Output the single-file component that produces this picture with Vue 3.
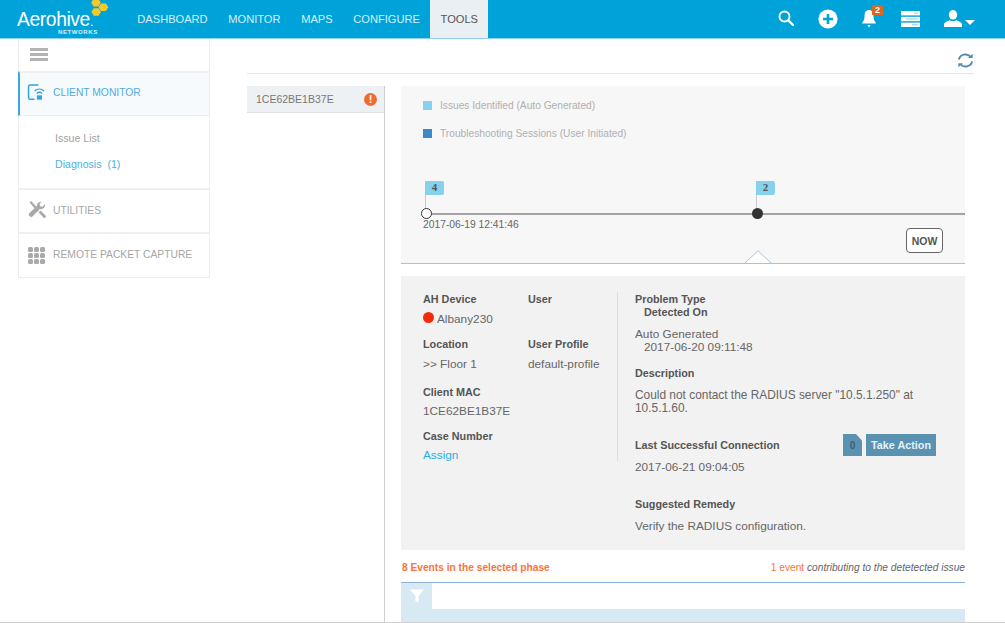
<script setup>
const navItems = [
  { label: 'DASHBOARD' },
  { label: 'MONITOR' },
  { label: 'MAPS' },
  { label: 'CONFIGURE' },
  { label: 'TOOLS', active: true }
]
const flags = [
  { count: 4, left: 24 },
  { count: 2, left: 355 }
]
</script>

<template>
  <div class="page">
    <header class="topbar">
      <div class="logo">
        <span class="logo-name">Aerohive<i>.</i></span>
        <span class="logo-sub">NETWORKS</span>
        <svg class="logo-hex" viewBox="0 0 20 20" width="20" height="20">
          <path d="M4.6 0h4.8l2.4 3.6-2.4 3.9H4.6L2.2 3.6z" fill="#f6c927" />
          <path d="M12 4.6h4.8l2.6 3.6-2.6 3.9H12L9.6 8.2z" fill="#f6c927" />
          <path d="M4.8 9.2h4.8l2.4 3.6-2.4 3.9H4.8l-2.4-3.9z" fill="#f6c927" />
        </svg>
      </div>
      <nav class="nav">
        <a v-for="item in navItems" :key="item.label" class="nav-item" :class="{ active: item.active }">{{ item.label }}</a>
      </nav>
      <div class="top-icons">
        <svg class="ico-search" viewBox="0 0 16 16" width="16" height="16" fill="none" stroke="#fff">
          <circle cx="6.5" cy="6.5" r="5" stroke-width="1.9" />
          <path d="M10.3 10.3 15 15" stroke-width="2.4" stroke-linecap="round" />
        </svg>
        <svg class="ico-plus" viewBox="0 0 20 20" width="20" height="20">
          <circle cx="10" cy="10" r="9.6" fill="#fff" />
          <path d="M10 5v10M5 10h10" stroke="#00a3d9" stroke-width="2.6" />
        </svg>
        <div class="bell-wrap">
          <svg viewBox="0 0 14 19" width="14" height="19">
            <path d="M7 1c3 0 4.4 2.4 4.4 5.4 0 3.4.8 5.4 2.3 7.2v1H.3v-1C1.800 11.800 2.600 9.800 2.600 6.400 2.600 3.400 4 1 7 1zM5.300 16h3.400L7 18.600z" fill="#fff" />
          </svg>
          <span class="badge">2</span>
        </div>
        <svg class="ico-server" viewBox="0 0 19 16" width="19" height="16">
          <rect y="0" width="19" height="4.400" fill="#fff" />
          <rect y="5.800" width="19" height="4.400" fill="#fff" />
          <rect y="11.600" width="19" height="4.400" fill="#fff" />
          <path d="M13 2.200h4M5 8h12M11 13.800h6" stroke="#7fd0ec" stroke-width="1" />
        </svg>
        <div class="user-wrap">
          <svg viewBox="0 0 18 17" width="18" height="17">
            <ellipse cx="9" cy="4.800" rx="4.200" ry="4.800" fill="#fff" />
            <path d="M0 17v-2.400c0-2.400 3.400-3.400 5.600-4.400 2 1.200 4.800 1.200 6.800 0 2.200 1 5.600 2 5.600 4.400V17z" fill="#fff" />
          </svg>
          <span class="caret"></span>
        </div>
      </div>
    </header>

    <div class="body">
      <aside class="sidebar">
        <div class="side-burger">
          <span></span><span></span><span></span>
        </div>
        <div class="side-head active">
          <svg viewBox="0 0 20 18" width="19" height="17" fill="none" stroke="#2fa6dc">
            <path d="M12 1H3.200C2.300 1 1.600 1.700 1.600 2.600v12c0 .9.7 1.600 1.600 1.600H8" stroke-width="1.600" />
            <path d="M8 7.400c2.800-2.600 7-2.600 10 0M10.200 10c1.600-1.400 4-1.400 5.600 0" stroke-width="1.500" />
            <rect x="10.400" y="12" width="5.400" height="4.600" fill="#2fa6dc" stroke="none" />
          </svg>
          <span>CLIENT MONITOR</span>
        </div>
        <div class="side-sub">
          <a class="sub-link">Issue List</a>
          <a class="sub-link current">Diagnosis&nbsp; (1)</a>
        </div>
        <div class="side-head util">
          <svg viewBox="0 0 18 18" width="18" height="18" fill="#a9a9a9">
            <path d="M1.300 1.100 3.400.2l7.800 8.600-1.900 1.900z" />
            <path d="M16.900 3.300a4 4 0 0 1-5 4.700L4.700 15.200A2.200 2.200 0 0 1 1.500 12l7.300-7.100A4 4 0 0 1 13.600.8L11.500 3l.7 2.300 2.400.5z" />
            <path d="m10.600 11.300 1.900-1.900 5 5.100a1.400 1.400 0 0 1-2.100 2z" />
          </svg>
          <span>UTILITIES</span>
        </div>
        <div class="side-head last">
          <div class="dots">
            <i v-for="n in 9" :key="n"></i>
          </div>
          <span>REMOTE PACKET CAPTURE</span>
        </div>
      </aside>

      <main class="main">
        <div class="toolbar">
          <svg viewBox="0 0 18 16" width="17" height="15" fill="none" stroke="#4f8cad" stroke-width="2">
            <path d="M2 7a7 6.400 0 0 1 12.400-3" />
            <path d="M16 9a7 6.400 0 0 1-12.400 3" />
            <path d="M16.600.8v4.400h-4.800z" fill="#4f8cad" stroke="none" />
            <path d="M1.400 15.200v-4.400h4.800z" fill="#4f8cad" stroke="none" />
          </svg>
        </div>

        <div class="split">
          <div class="client-col">
            <div class="client-row">
              <span>1CE62BE1B37E</span>
              <span class="alert">!</span>
            </div>
          </div>

          <div class="content">
            <section class="timeline">
              <div class="legend"><i class="sq light"></i>Issues Identified (Auto Generated)</div>
              <div class="legend second"><i class="sq dark"></i>Troubleshooting Sessions (User Initiated)</div>

              <div class="track">
                <div v-for="f in flags" :key="f.count" class="flag" :style="{ left: f.left + 'px' }">{{ f.count }}</div>
                <div class="rail"></div>
                <span class="node open"></span>
                <span class="node solid"></span>
                <div class="stamp">2017-06-19 12:41:46</div>
              </div>

              <div class="now-row"><button class="now">NOW</button></div>
              <svg class="pointer" viewBox="0 0 26 13" width="26" height="13">
                <path d="M0 13 13 .7 26 13" fill="#fff" stroke="#a5c4da" />
              </svg>
            </section>

            <section class="detail">
              <div class="detail-left">
                <div class="info-col first">
                  <div class="lbl">AH Device</div>
                  <div class="val device"><i class="dot"></i>Albany230</div>
                  <div class="lbl">Location</div>
                  <div class="val floor">&gt;&gt; Floor 1</div>
                  <div class="lbl">Client MAC</div>
                  <div class="val close">1CE62BE1B37E</div>
                  <div class="lbl">Case Number</div>
                  <div class="val link close">Assign</div>
                </div>
                <div class="info-col">
                  <div class="lbl">User</div>
                  <div class="val device"></div>
                  <div class="lbl">User Profile</div>
                  <div class="val">default-profile</div>
                </div>
              </div>
              <div class="detail-right">
                <div class="lbl tight">Problem Type</div>
                <div class="lbl tight indent">Detected On</div>
                <div class="val tight gap-top">Auto Generated</div>
                <div class="val tight indent">2017-06-20 09:11:48</div>
                <div class="lbl tight gap-desc">Description</div>
                <div class="val para">Could not contact the RADIUS server "10.5.1.250" at<br />10.5.1.60.</div>
                <div class="last-row">
                  <div class="lbl tight">Last Successful Connection</div>
                  <div class="actions">
                    <div class="doc">0</div>
                    <button class="take">Take Action</button>
                  </div>
                </div>
                <div class="val tight date">2017-06-21 09:04:05</div>
                <div class="lbl tight remedy">Suggested Remedy</div>
                <div class="val tight verify">Verify the RADIUS configuration.</div>
              </div>
            </section>

            <div class="events">
              <span class="ev-left">8 Events in the selected phase</span>
              <span class="ev-right"><b>1 event</b> <em>contributing to the detetected issue</em></span>
            </div>

            <div class="filter-row">
              <div class="filter-btn">
                <svg viewBox="0 0 14 14" width="14" height="14">
                  <path d="M0 .5h14L8.600 7v6.500L5.400 12V7z" fill="#fff" />
                </svg>
              </div>
            </div>
            <div class="table-head"></div>
          </div>
        </div>
      </main>
    </div>
  </div>
</template>

<style>
html, body {
  margin: 0;
  background: #fff;
}
</style>

<style scoped>
.page {
  width: 1005px;
  height: 623px;
  overflow: hidden;
  font-family: "Liberation Sans", Arial, sans-serif;
  color: #666;
  display: flex;
  flex-direction: column;
  position: relative;
  box-sizing: border-box;
  border-bottom: 1px solid #cfcfcf;
}

.topbar {
  height: 39px;
  flex: none;
  box-sizing: border-box;
  background: #00a3d9;
  border-bottom: 1px solid #8fd4ee;
  display: flex;
  align-items: stretch;
}

.logo {
  position: relative;
  width: 127px;
  flex: none;
}
.logo-name {
  position: absolute;
  left: 17px;
  top: 11px;
  font-size: 19.3px;
  letter-spacing: -0.4px;
  color: #fff;
  line-height: 18px;
}
.logo-name i {
  font-style: normal;
  font-size: 12px;
}
.logo-sub {
  position: absolute;
  left: 58px;
  top: 29px;
  font-size: 6px;
  font-weight: bold;
  letter-spacing: 0.6px;
  color: #d8f2fb;
  line-height: 6px;
}
.logo-hex {
  position: absolute;
  left: 89px;
  top: -1px;
}

.nav {
  display: flex;
}
.nav-item {
  display: flex;
  align-items: center;
  padding: 0 10.35px;
  font-size: 11.1px;
  color: #d5eff9;
}
.nav-item.active {
  background: #e9eff2;
  color: #555;
  height: 38px;
}

.top-icons {
  margin-left: auto;
  display: flex;
  align-items: center;
  padding-right: 30px;
}
.ico-search {
  margin-right: 24px;
  margin-bottom: 2px;
}
.ico-plus {
  margin-right: 24px;
}
.bell-wrap {
  position: relative;
  width: 14px;
  height: 19px;
  margin-right: 25px;
  margin-top: -1px;
}
.bell-wrap svg {
  display: block;
}
.badge {
  position: absolute;
  left: 10px;
  top: -4px;
  width: 11px;
  height: 10px;
  background: #d9691f;
  color: #fff;
  font-size: 9px;
  font-weight: bold;
  line-height: 10px;
  text-align: center;
}
.ico-server {
  margin-right: 24px;
}
.user-wrap {
  display: flex;
  align-items: flex-end;
  gap: 3px;
  margin-top: -2px;
}
.user-wrap svg {
  display: block;
}
.caret {
  width: 0;
  height: 0;
  border-left: 5px solid transparent;
  border-right: 5px solid transparent;
  border-top: 5px solid #fff;
  margin-bottom: 2px;
}

.body {
  flex: 1;
  min-height: 0;
  display: flex;
  align-items: flex-start;
}

.sidebar {
  width: 192px;
  margin-left: 18px;
  flex: none;
  box-sizing: border-box;
  border: 1px solid #ececec;
  border-top: none;
}
.side-burger {
  height: 32px;
  padding: 9px 0 0 11px;
  box-sizing: border-box;
}
.side-burger span {
  display: block;
  width: 18px;
  height: 2.500px;
  background: #b3b3b3;
  margin-bottom: 2.500px;
}
.side-head {
  height: 44px;
  display: flex;
  align-items: center;
  gap: 7px;
  padding-left: 9px;
  padding-bottom: 3px;
  font-size: 10.300px;
  color: #a6a6a6;
  border-top: 2px solid #efefef;
  box-sizing: border-box;
}
.side-head svg {
  flex: none;
}
.side-head.util {
  padding-bottom: 2px;
}
.side-head.active {
  color: #52a9dc;
  background: #f6fafd;
  border-left: 2px solid #3aa8de;
  margin-left: -1px;
  padding-left: 7px;
  height: 45px;
  border-bottom: 1px solid #ececec;
}
.side-head.last {
  height: 45px;
}
.side-sub {
  height: 72px;
  padding: 16px 0 0 36px;
  box-sizing: border-box;
}
.sub-link {
  display: block;
  font-size: 10.600px;
  color: #a3a3a3;
  line-height: 13px;
  margin-bottom: 12.500px;
}
.sub-link.current {
  color: #4fafe0;
}
.dots {
  display: grid;
  grid-template-columns: repeat(3, 5px);
  grid-auto-rows: 5px;
  gap: 1px;
  flex: none;
  margin-top: 2px;
  margin-right: 1px;
}
.dots i {
  background: #a9a9a9;
  border-radius: 1.500px;
}

.main {
  width: 718px;
  margin-left: 37px;
  flex: none;
  height: 583px;
  display: flex;
  flex-direction: column;
}

.toolbar {
  height: 35px;
  flex: none;
  box-sizing: border-box;
  border-bottom: 1px solid #e6e6e6;
  display: flex;
  justify-content: flex-end;
  align-items: flex-start;
  padding: 14px 0 0;
  margin-right: -9px;
}

.split {
  flex: 1;
  min-height: 0;
  display: flex;
  padding-top: 12px;
}
.client-col {
  width: 138px;
  flex: none;
  box-sizing: border-box;
  border-right: 1px solid #cfcfcf;
}
.client-row {
  height: 27px;
  box-sizing: border-box;
  background: #eef1f3;
  border-bottom: 1px solid #e2e2e2;
  display: flex;
  align-items: center;
  justify-content: space-between;
  padding: 0 7px 0 9px;
  font-size: 10.500px;
  color: #777;
}
.alert {
  width: 13px;
  height: 13px;
  border-radius: 50%;
  background: #ef6c2e;
  color: #fff;
  font-size: 11px;
  font-weight: bold;
  line-height: 13px;
  text-align: center;
}

.content {
  width: 564px;
  margin-left: 16px;
  flex: none;
  display: flex;
  flex-direction: column;
}

.timeline {
  height: 178px;
  flex: none;
  box-sizing: border-box;
  background: #f7f7f7;
  border-bottom: 1px solid #a5c4da;
  position: relative;
  padding: 14px 0 0 22px;
}
.legend {
  display: flex;
  align-items: center;
  font-size: 10.200px;
  color: #b0b0b0;
  line-height: 12px;
}
.legend.second {
  margin-top: 16px;
}
.sq {
  width: 9px;
  height: 9px;
  margin-right: 8px;
  margin-top: -2px;
}
.sq.light { background: #86d1ee; }
.sq.dark { background: #3f88c8; }

.track {
  position: absolute;
  left: 0;
  right: 0;
  top: 95px;
  height: 50px;
}
.flag {
  position: absolute;
  top: 0;
  width: 19px;
  height: 14px;
  background: #86d1ee;
  border-radius: 0 2px 2px 0;
  font-family: "Liberation Serif", serif;
  font-size: 11px;
  font-weight: bold;
  color: #555;
  line-height: 13px;
  text-align: center;
}
.flag::after {
  content: "";
  position: absolute;
  left: 0;
  top: 14px;
  width: 1px;
  height: 14px;
  background: #c8c8c8;
}
.rail {
  position: absolute;
  left: 24px;
  right: 0;
  top: 32px;
  height: 2px;
  background: #a3a3a3;
}
.node {
  position: absolute;
  top: 27px;
  width: 11px;
  height: 11px;
  box-sizing: border-box;
  border-radius: 50%;
}
.node.open {
  left: 20px;
  background: #fff;
  border: 1.500px solid #333;
}
.node.solid {
  left: 351px;
  background: #333;
}
.stamp {
  position: absolute;
  left: 22px;
  top: 38px;
  font-size: 10.300px;
  color: #666;
  line-height: 12px;
}
.now-row {
  position: absolute;
  right: 22px;
  top: 142px;
}
.now {
  width: 37px;
  height: 25px;
  padding: 0;
  box-sizing: border-box;
  background: #fff;
  border: 1.500px solid #666;
  border-radius: 4px;
  font: bold 10.500px "Liberation Sans", Arial, sans-serif;
  color: #555;
}
.pointer {
  position: absolute;
  left: 344px;
  bottom: 0;
}

.detail {
  height: 274px;
  flex: none;
  margin-top: 12px;
  background: #f2f2f2;
  display: flex;
  box-sizing: border-box;
  padding: 16px 0 0 22px;
}
.detail-left {
  display: flex;
  width: 194px;
  height: 169px;
  flex: none;
  border-right: 1px solid #dedede;
}
.info-col.first {
  width: 105px;
  flex: none;
}
.lbl {
  font-size: 10.800px;
  font-weight: bold;
  color: #555;
  line-height: 14px;
}
.val {
  font-size: 11.800px;
  color: #666;
  line-height: 14px;
  margin-top: 6px;
  margin-bottom: 11px;
  min-height: 14px;
}
.val.floor {
  margin-bottom: 14px;
}
.val.close {
  margin-top: 5px;
}
.val.device {
  display: flex;
  align-items: center;
}
.dot {
  width: 11px;
  height: 11px;
  border-radius: 50%;
  background: #f42a0c;
  margin-right: 3px;
  margin-top: -3px;
}
.val.link {
  color: #2baee3;
}
.detail-right {
  padding: 1px 0 0 17px;
  flex: 1;
}
.tight {
  margin: 0;
  line-height: 13px;
  min-height: 0;
}
.indent {
  padding-left: 9px;
}
.gap-top {
  margin-top: 9px;
}
.gap-desc {
  margin-top: 13px;
}
.val.para {
  margin: 9px 0 0;
  line-height: 13px;
  font-size: 11.900px;
}
.last-row {
  display: flex;
  align-items: center;
  justify-content: space-between;
  width: 301px;
  height: 22px;
  margin-top: 19px;
}
.actions {
  display: flex;
  gap: 4px;
}
.doc {
  width: 19px;
  height: 22px;
  background: #5a93b1;
  clip-path: polygon(0 0, 68% 0, 100% 30%, 100% 100%, 0 100%);
  color: #3d5f72;
  font-size: 10px;
  font-weight: bold;
  line-height: 24px;
  text-align: center;
}
.take {
  width: 70px;
  height: 22px;
  padding: 0;
  border: none;
  background: #5a93b1;
  color: #e6f1f6;
  font: bold 10.800px "Liberation Sans", Arial, sans-serif;
}
.date {
  margin-top: 5px;
}
.remedy {
  margin-top: 24px;
}
.verify {
  margin-top: 9px;
}

.events {
  height: 33px;
  flex: none;
  box-sizing: border-box;
  display: flex;
  justify-content: space-between;
  align-items: center;
  font-size: 10.200px;
  border-bottom: 1px solid #8db4d4;
  padding: 3px 0 0 1px;
}
.ev-left {
  font-weight: bold;
  color: #f9743a;
}
.ev-right b {
  font-weight: normal;
  color: #f9743a;
}
.ev-right em {
  color: #666;
}
.filter-row {
  height: 26px;
  flex: none;
  display: flex;
}
.filter-btn {
  width: 31px;
  background: #d7eaf4;
  display: flex;
  align-items: center;
  justify-content: center;
}
.table-head {
  flex: 1;
  min-height: 0;
  background: #d7eaf4;
}
</style>
